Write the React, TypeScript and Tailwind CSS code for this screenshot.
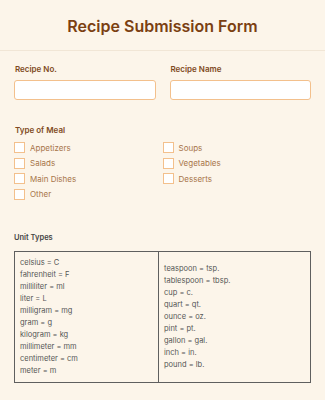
const left = [
  'celsius = C',
  'fahrenheit = F',
  'milliliter = ml',
  'liter = L',
  'milligram = mg',
  'gram = g',
  'kilogram = kg',
  'millimeter = mm',
  'centimeter = cm',
  'meter = m',
];

const right = [
  'teaspoon = tsp.',
  'tablespoon = tbsp.',
  'cup = c.',
  'quart = qt.',
  'ounce = oz.',
  'pint = pt.',
  'gallon = gal.',
  'inch = in.',
  'pound = lb.',
];

function Check({ label }: { label: string }) {
  return (
    <label className="flex items-center gap-[5px] h-[15.5px]">
      <span className="w-[11px] h-[11px] border border-[#f3c08c] bg-white shrink-0" />
      <span className="text-[8px] leading-[10px] text-[#a8764a]">{label}</span>
    </label>
  );
}

export default function App() {
  return (
    <div className="w-[325px] h-[400px] bg-[#fcf5ea] font-['Inter',sans-serif] overflow-hidden">
      <header className="h-[51px] flex items-center justify-center border-b border-[#f1e6d6]">
        <h1 className="text-[16px] font-semibold text-[#7b3f12] pt-[1px]">Recipe Submission Form</h1>
      </header>

      <div className="px-[14px]">
        {/* recipe fields */}
        <div className="grid grid-cols-2 gap-[14px] mt-[13px]">
          <div>
            <div className="text-[8px] leading-[10px] font-semibold text-[#7f4a22] pl-[1px] mb-[6px]">Recipe No.</div>
            <input className="block w-full h-[20px] bg-white border border-[#f3c08c] rounded-[3px] outline-none" />
          </div>
          <div>
            <div className="text-[8px] leading-[10px] font-semibold text-[#7f4a22] pl-[1px] mb-[6px]">Recipe Name</div>
            <input className="block w-full h-[20px] bg-white border border-[#f3c08c] rounded-[3px] outline-none" />
          </div>
        </div>

        {/* meal type */}
        <div className="mt-[25px]">
          <div className="text-[8px] leading-[10px] font-semibold text-[#7f4a22] pl-[1px] mb-[5px]">Type of Meal</div>
          <div className="grid grid-cols-2">
            <div className="flex flex-col">
              <Check label="Appetizers" />
              <Check label="Salads" />
              <Check label="Main Dishes" />
              <Check label="Other" />
            </div>
            <div className="flex flex-col">
              <Check label="Soups" />
              <Check label="Vegetables" />
              <Check label="Desserts" />
            </div>
          </div>
        </div>

        {/* units */}
        <div className="mt-[31px]">
          <div className="text-[7.5px] leading-[10px] font-semibold text-[#444]">Unit Types</div>
          <div className="mt-[8px] grid grid-cols-[144px_1fr] border-[1.5px] border-[#5f5f5f] h-[132px] w-[297px]">
            <div className="border-r-[1.5px] border-[#5f5f5f] px-[5px] flex flex-col justify-center">
              {left.map((t) => (
                <div key={t} className="text-[7.5px] leading-[12px] text-[#555]">{t}</div>
              ))}
            </div>
            <div className="px-[5px] flex flex-col justify-center">
              {right.map((t) => (
                <div key={t} className="text-[7.5px] leading-[12px] text-[#555]">{t}</div>
              ))}
            </div>
          </div>
        </div>
      </div>
    </div>
  );
}
